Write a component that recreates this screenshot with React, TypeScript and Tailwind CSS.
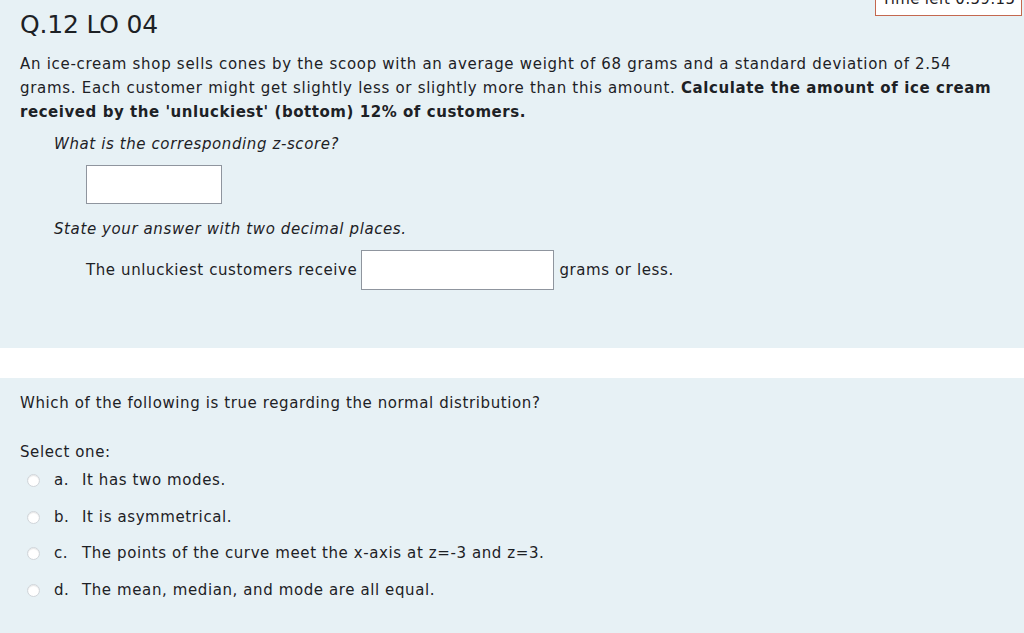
import React from "react";

const font = { fontFamily: "'DejaVu Sans', sans-serif" };

function Radio({ letter, text }: { letter: string; text: string }) {
  return (
    <div className="flex items-center h-[36.7px]">
      <span className="ml-[7px] w-[13px] h-[13px] rounded-full bg-white border border-[#d0d5da] shadow-[inset_0_1px_1px_rgba(0,0,0,0.1)]" />
      <span className="ml-[14px] w-[28px]">{letter}</span>
      <span>{text}</span>
    </div>
  );
}

export default function App() {
  return (
    <div
      className="w-[1024px] h-[633px] overflow-hidden bg-white text-[#1d2125] text-[15px] tracking-[0.6px] relative"
      style={font}
    >
      <div className="absolute right-[2px] top-[-22px] w-[147px] h-[38px] border border-[#c4684f] bg-white flex items-end justify-center pb-[6px] text-[15px] leading-[20px] tracking-[0.3px] text-[#1d2125]">
        Time left 0:59:15
      </div>
      <section className="bg-[#e7f1f5] h-[348px] px-[20px] pt-[8px]">
        <h2 className="text-[25px] leading-[34px] tracking-[-0.2px]">Q.12 LO 04</h2>
        <p className="mt-[10px] leading-[24px] whitespace-nowrap tracking-[0.7px]">
          An ice-cream shop sells cones by the scoop with an average weight of 68 grams and a standard deviation of 2.54
          <br />
          grams. Each customer might get slightly less or slightly more than this amount.{" "}
          <strong className="font-bold tracking-[0.6px]">Calculate the amount of ice cream</strong>
          <br />
          <strong className="font-bold tracking-[0.55px]">
            received by the 'unluckiest' (bottom) 12% of customers.
          </strong>
        </p>
        <p className="ml-[34px] mt-[8px] italic leading-[24px]">What is the corresponding z-score?</p>
        <div className="ml-[66px] mt-[9px] w-[136px] h-[39px] bg-white border border-[#8f959e]" />
        <p className="ml-[34px] mt-[13px] italic leading-[24px]">State your answer with two decimal places.</p>
        <div className="ml-[66px] mt-[9px] flex items-center">
          <span>The unluckiest customers receive</span>
          <span className="ml-[4px] w-[193px] h-[40px] bg-white border border-[#8f959e]" />
          <span className="ml-[5px]">grams or less.</span>
        </div>
      </section>
      <div className="h-[30px] bg-white" />
      <section className="bg-[#e7f1f5] h-[255px] px-[20px] pt-[13px]">
        <p className="leading-[24px]">Which of the following is true regarding the normal distribution?</p>
        <p className="mt-[25px] leading-[24px]">Select one:</p>
        <div className="mt-[-2px]">
          <Radio letter="a." text="It has two modes." />
          <Radio letter="b." text="It is asymmetrical." />
          <Radio letter="c." text="The points of the curve meet the x-axis at z=-3 and z=3." />
          <Radio letter="d." text="The mean, median, and mode are all equal." />
        </div>
      </section>
    </div>
  );
}
